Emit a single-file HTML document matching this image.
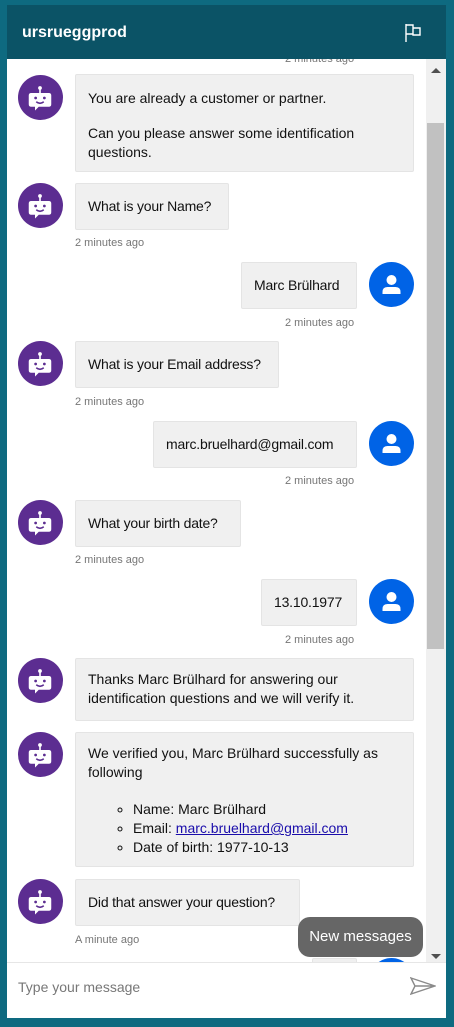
<!DOCTYPE html>
<html><head><meta charset="utf-8"><style>
*{box-sizing:border-box;margin:0;padding:0}
body{width:454px;height:1027px;background:#0e6a80;font-family:"Liberation Sans",sans-serif;position:relative;overflow:hidden;color:#111}
#panel{position:absolute;left:7px;top:5px;width:439px;height:1013px;background:#fff;overflow:hidden}
#hdr{position:absolute;left:0;top:0;width:439px;height:54px;background:#0b5366;color:#fff;font-weight:bold;font-size:16px;padding:19px 0 0 15px}
.a{position:absolute}
.bub{position:absolute;background:#f0f0f0;border:1px solid #e4e4e4;border-radius:2px;font-size:14px;line-height:19px;padding:13px 12px}
.nw{white-space:nowrap;letter-spacing:-0.2px}
.ts{position:absolute;font-size:11px;color:#767676}
.bot{position:absolute;left:11px;width:45px;height:45px;border-radius:50%;background:#5c2d91}
.usr{position:absolute;left:362px;width:45px;height:45px;border-radius:50%;background:#0063e6}
ul{padding-left:45px;list-style:circle;margin-top:18px}
a{color:#1a0dab;text-decoration:underline}
</style></head><body>
<div id="panel">
<div class="ts" style="left:278px;top:48px">2 minutes ago</div>
<div id="hdr">ursrueggprod
<svg class="a" style="left:397px;top:18px" width="18" height="20" viewBox="0 0 18 20" fill="none" stroke="#fff" stroke-width="1.4"><path d="M2 1V19M2 2H9V11H2M9 5H16V12H9V11"/></svg></div>
<div class="a" style="left:419px;top:54px;width:20px;height:908px;background:#f0f0f0"></div>
<div class="a" style="left:420px;top:118px;width:17px;height:526px;background:#c1c1c1"></div>
<div class="a" style="left:424px;top:63px;border-left:5px solid transparent;border-right:5px solid transparent;border-bottom:5px solid #505050"></div>
<div class="a" style="left:424px;top:949px;border-left:5px solid transparent;border-right:5px solid transparent;border-top:5px solid #505050"></div>

<svg width="0" height="0" style="position:absolute"><defs>
<g id="bi" transform="scale(1.25)"><circle cx="0" cy="-8" r="1.5" fill="#fff"/><path d="M0-7V-4" stroke="#fff" stroke-width="1.3"/><path d="M-7-4H7Q9-4 9-2V5Q9 7 7 7H-1L-4 10V7H-7Q-9 7-9 5V-2Q-9-4-7-4Z" fill="#fff"/><circle cx="-3.5" cy="0" r="1.1" fill="#5c2d91"/><circle cx="3.5" cy="0" r="1.1" fill="#5c2d91"/><path d="M-3 3Q0 5.5 3 3" stroke="#5c2d91" stroke-width="1.2" fill="none"/></g>
<g id="ui"><circle cx="0" cy="-5" r="5" fill="#fff"/><path d="M-9 9V7Q-9 2-4 2H4Q9 2 9 7V9Z" fill="#fff"/></g>
</defs></svg>

<div class="bot" style="top:70px"><svg width="45" height="45"><use href="#bi" x="22" y="23"/></svg></div>
<div class="bub" style="left:68px;top:69px;width:339px;height:98px;padding-top:14px">You are already a customer or partner.<div style="height:16px"></div>Can you please answer some identification questions.</div>

<div class="bot" style="top:178px"><svg width="45" height="45"><use href="#bi" x="22" y="23"/></svg></div>
<div class="bub nw" style="left:68px;top:178px;width:154px;height:47px">What is your Name?</div>
<div class="ts" style="left:68px;top:232px">2 minutes ago</div>

<div class="usr" style="top:257px"><svg width="45" height="45"><use href="#ui" x="22.5" y="23"/></svg></div>
<div class="bub nw" style="left:234px;top:257px;width:116px;height:47px">Marc Brülhard</div>
<div class="ts" style="left:278px;top:312px">2 minutes ago</div>

<div class="bot" style="top:336px"><svg width="45" height="45"><use href="#bi" x="22" y="23"/></svg></div>
<div class="bub nw" style="left:68px;top:336px;width:204px;height:47px">What is your Email address?</div>
<div class="ts" style="left:68px;top:391px">2 minutes ago</div>

<div class="usr" style="top:416px"><svg width="45" height="45"><use href="#ui" x="22.5" y="23"/></svg></div>
<div class="bub nw" style="left:146px;top:416px;width:204px;height:47px">marc.bruelhard@gmail.com</div>
<div class="ts" style="left:278px;top:470px">2 minutes ago</div>

<div class="bot" style="top:495px"><svg width="45" height="45"><use href="#bi" x="22" y="23"/></svg></div>
<div class="bub nw" style="left:68px;top:495px;width:166px;height:47px">What your birth date?</div>
<div class="ts" style="left:68px;top:549px">2 minutes ago</div>

<div class="usr" style="top:574px"><svg width="45" height="45"><use href="#ui" x="22.5" y="23"/></svg></div>
<div class="bub nw" style="left:254px;top:574px;width:96px;height:47px">13.10.1977</div>
<div class="ts" style="left:278px;top:629px">2 minutes ago</div>

<div class="bot" style="top:653px"><svg width="45" height="45"><use href="#bi" x="22" y="23"/></svg></div>
<div class="bub" style="left:68px;top:653px;width:339px;height:63px;padding-top:11px">Thanks Marc Brülhard for answering our identification questions and we will verify it.</div>

<div class="bot" style="top:727px"><svg width="45" height="45"><use href="#bi" x="22" y="23"/></svg></div>
<div class="bub" style="left:68px;top:727px;width:339px;height:135px;padding-top:11px">We verified you, Marc Brülhard successfully as following<ul><li>Name: Marc Brülhard</li><li>Email: <a>marc.bruelhard@gmail.com</a></li><li>Date of birth: 1977-10-13</li></ul></div>

<div class="bot" style="top:874px"><svg width="45" height="45"><use href="#bi" x="22" y="23"/></svg></div>
<div class="bub nw" style="left:68px;top:874px;width:225px;height:47px">Did that answer your question?</div>
<div class="ts" style="left:68px;top:929px">A minute ago</div>

<div class="bub" style="left:305px;top:953px;width:45px;height:40px;padding:0"></div>
<div class="usr" style="top:953px"></div>

<div class="a" style="left:291px;top:912px;width:125px;height:40px;border-radius:12px;background:#666;color:#fff;font-size:15px;line-height:40px;text-align:center">New messages</div>

<div class="a" style="left:0;top:957px;width:439px;height:56px;background:#fff;border-top:1px solid #e6e6e6"></div>
<div class="a" style="left:11px;top:974px;font-size:14px;color:#777">Type your message</div>
<svg class="a" style="left:403px;top:972px" width="26" height="18" viewBox="0 0 26 18" fill="none" stroke="#8a8a8a" stroke-width="1.4"><path d="M1 1L25 9L1 17L5 9Z M5 9H25"/></svg>
</div>
</body></html>
